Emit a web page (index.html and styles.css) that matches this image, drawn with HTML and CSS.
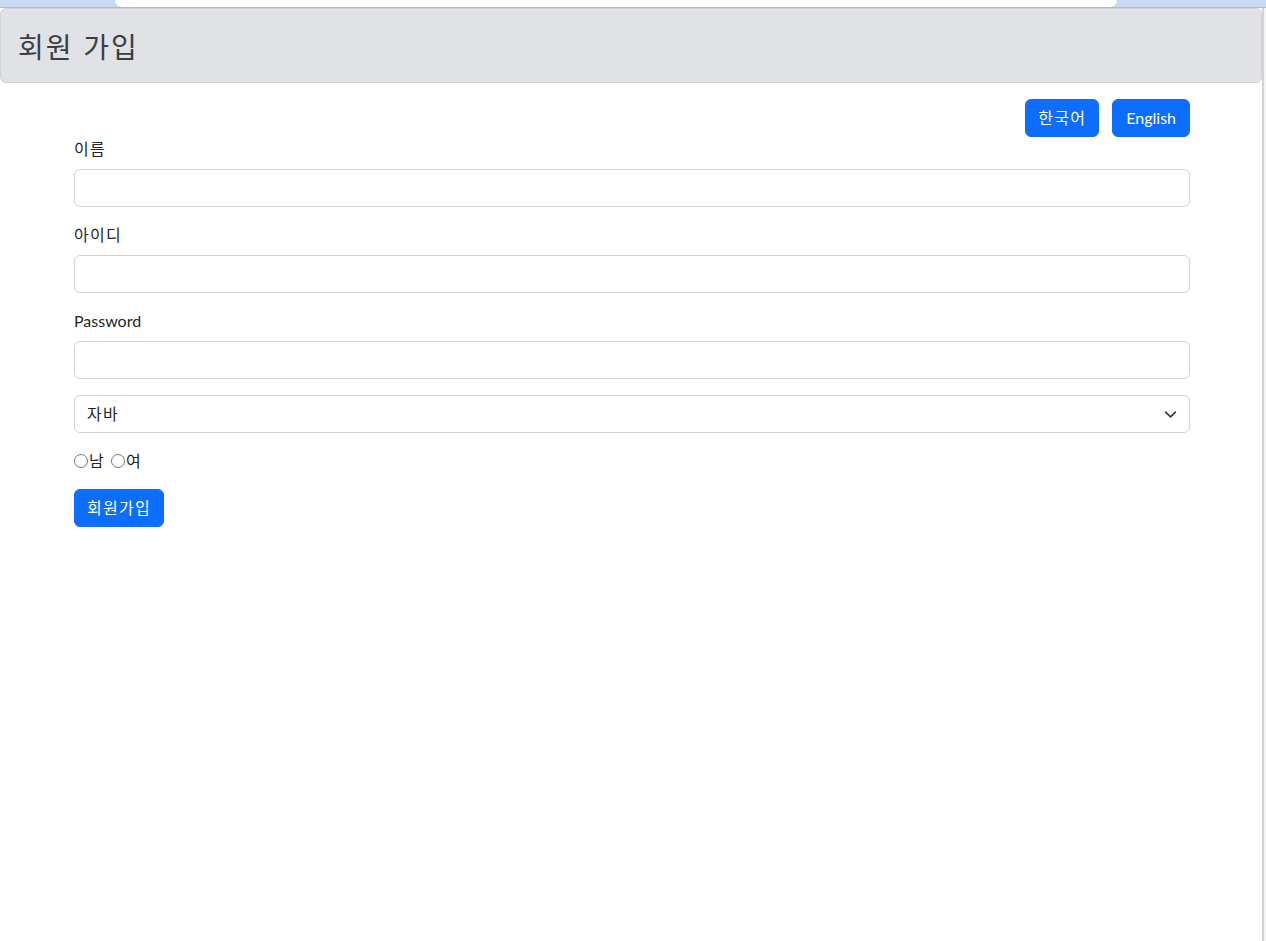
FILE: index.html
```html
<!DOCTYPE html>
<html lang="ko">

<head>
    <meta charset="UTF-8">
    <meta name="viewport" content="width=device-width, initial-scale=1.0">
    <title>회원 가입</title>
    <link rel="stylesheet" href="styles.css">
</head>

<body>
    <div class="topbar">
        <div class="topbar-tab"></div>
    </div>
    <div class="frame">
        <div class="page">
            <div class="header">
                <h3 class="title">회원 가입</h3>
            </div>
            <div class="container">
                <div class="lang">
                    <button class="btn ko" type="button">한국어</button>
                    <button class="btn btn-en" type="button">English</button>
                </div>
                <form class="join-form">
                    <div class="field">
                        <label class="form-label ko" for="name">이름</label>
                        <input class="form-control" type="text" id="name">
                    </div>
                    <div class="field">
                        <label class="form-label ko" for="userId">아이디</label>
                        <input class="form-control" type="text" id="userId">
                    </div>
                    <div class="field">
                        <label class="form-label" for="pw">Password</label>
                        <input class="form-control" type="password" id="pw">
                    </div>
                    <div class="field">
                        <div class="form-select">
                            <span class="ko">자바</span>
                            <svg class="chevron" viewBox="0 0 16 16" xmlns="http://www.w3.org/2000/svg">
                                <path d="m2 5 6 6 6-6" fill="none" stroke="#343a40" stroke-width="2" stroke-linecap="round" stroke-linejoin="round" />
                            </svg>
                        </div>
                    </div>
                    <div class="field radios">
                        <label class="radio ko"><span class="dot"></span>남</label>
                        <label class="radio ko"><span class="dot"></span>여</label>
                    </div>
                    <button class="btn ko" type="button">회원가입</button>
                </form>
            </div>
        </div>
        <div class="side"></div>
    </div>
</body>

</html>
```

FILE: styles.css
```css
* {
    box-sizing: border-box;
}

body {
    margin: 0;
    background-color: #ffffff;
    font-family: "Lato", "Noto Sans CJK KR", sans-serif;
    font-size: 16px;
    line-height: 1.5;
    color: #212529;
}

/* hangul is a little narrower here than in the original font */
.ko {
    letter-spacing: 1.3px;
}

/* strip of the browser window above the page */
.topbar {
    height: 8px;
    background-color: #c7daf4;
    border-bottom: 1px solid #a9bcd6;
    padding: 0 149px 0 115px;
}

.topbar-tab {
    height: 7px;
    background-color: #ffffff;
    border-radius: 0 0 8px 8px;
}

.frame {
    display: flex;
    min-height: 933px;
}

.page {
    width: 1262px;
}

.side {
    flex: 1;
    border-left: 2px solid #d2d2d2;
    background-color: #f4f4f4;
}

.header {
    height: 75px;
    background-color: #e1e2e5;
    border: 1px solid #cfd1d4;
    border-radius: 6px;
    padding: 20px 17px 0;
}

.title {
    margin: 0;
    font-family: "Noto Sans CJK KR", sans-serif;
    font-size: 28px;
    font-weight: 400;
    line-height: 34px;
    letter-spacing: 2px;
    color: #3a3e43;
}

.container {
    width: 1116px;
    margin-left: 74px;
}

.lang {
    display: flex;
    justify-content: flex-end;
    gap: 13px;
    padding-top: 16px;
}

.btn {
    height: 38px;
    padding: 0 12px;
    border: 1px solid #0d6efd;
    border-radius: 6px;
    background-color: #0d6efd;
    color: #ffffff;
    font-family: "Lato", "Noto Sans CJK KR", sans-serif;
    font-size: 16px;
    line-height: 36px;
    cursor: pointer;
}

.btn-en {
    padding: 0 13px;
}

.field {
    margin-bottom: 16px;
}

.form-label {
    display: block;
    margin-bottom: 8px;
    line-height: 24px;
}

.form-control {
    display: block;
    width: 100%;
    height: 38px;
    border: 1px solid #ced4da;
    border-radius: 6px;
    padding: 6px 12px;
    font-size: 16px;
}

.form-select {
    display: flex;
    justify-content: space-between;
    align-items: center;
    height: 38px;
    border: 1px solid #ced4da;
    border-radius: 6px;
    padding: 0 12px;
}

.chevron {
    width: 13px;
    height: 13px;
}

.radios {
    display: flex;
    gap: 6px;
    line-height: 24px;
    height: 24px;
}

.radio {
    display: flex;
    align-items: center;
}

.dot {
    width: 14px;
    height: 14px;
    border: 1px solid #767676;
    border-radius: 50%;
    margin-right: 1px;
}

.join-form .btn {
    display: block;
}
```
